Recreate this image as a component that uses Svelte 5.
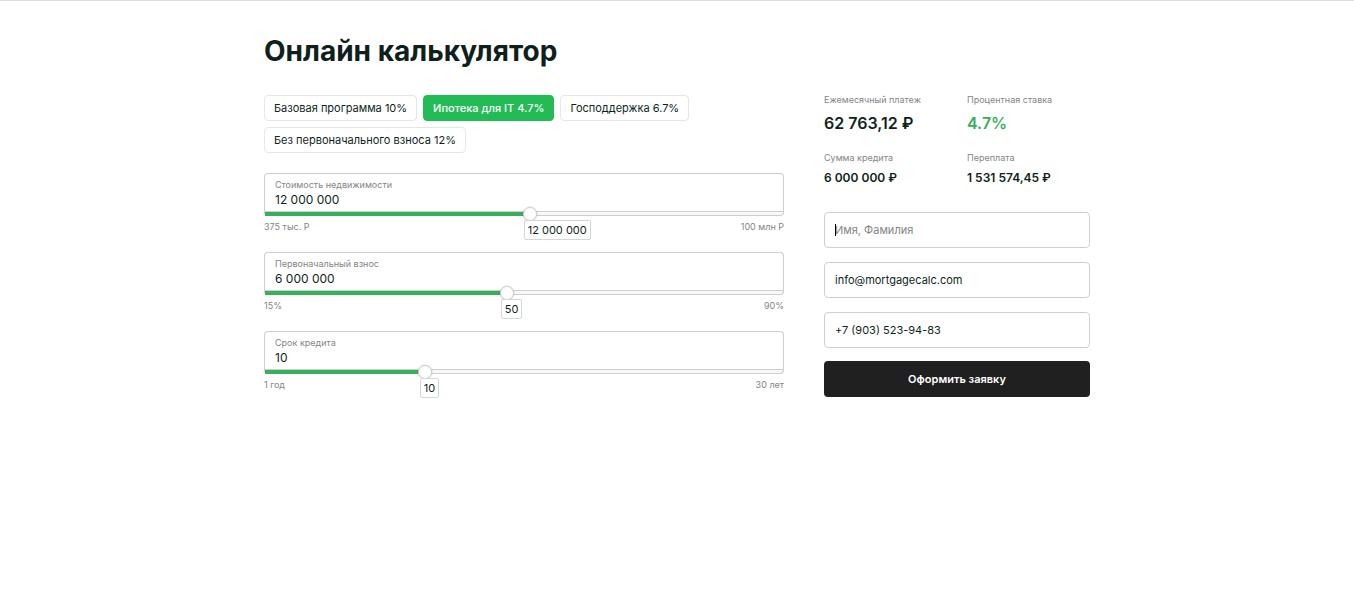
<script>
  let programs = ['Базовая программа 10%', 'Ипотека для IT 4.7%', 'Господдержка 6.7%', 'Без первоначального взноса 12%'];
  let active = $state(1);

  let sliders = $state([
    { id: 'cost', label: 'Стоимость недвижимости', value: '12 000 000', tip: '12 000 000', min: 0, max: 100, step: 0.1, pos: 51.1, from: '375 тыс. Р', to: '100 млн Р' },
    { id: 'payment', label: 'Первоначальный взнос', value: '6 000 000', tip: '50', min: 15, max: 90, step: 1, pos: 50, from: '15%', to: '90%' },
    { id: 'term', label: 'Срок кредита', value: '10', tip: '10', min: 1, max: 30, step: 1, pos: 10, from: '1 год', to: '30 лет' }
  ]);

  const share = (s) => ((s.pos - s.min) / (s.max - s.min)) * 100;

  let totals = [
    { label: 'Ежемесячный платеж', value: '62 763,12 ₽', kind: 'big' },
    { label: 'Процентная ставка', value: '4.7%', kind: 'big green' },
    { label: 'Сумма кредита', value: '6 000 000 ₽', kind: '' },
    { label: 'Переплата', value: '1 531 574,45 ₽', kind: '' }
  ];

  let name = $state('');
  let email = $state('info@mortgagecalc.com');
  let phone = $state('+7 (903) 523-94-83');
</script>

<main>
  <div class="container">
    <h1>Онлайн калькулятор</h1>
    <div class="columns">
      <section class="params">
        <div class="programs">
          {#each programs as p, i}
            <button type="button" class="program" class:active={active === i} aria-pressed={active === i} onclick={() => (active = i)}>{p}</button>
          {/each}
        </div>

        {#each sliders as s}
          <div class="param">
            <div class="box">
              <label for={s.id}>{s.label}</label>
              <input class="value" id={s.id} type="text" bind:value={s.value} />
              <div class="track">
                <div class="fill" style="width: {share(s)}%"></div>
                <input class="range" type="range" min={s.min} max={s.max} step={s.step} bind:value={s.pos} aria-label={s.label} />
                <output class="tip" style="left: {share(s)}%">{s.tip}</output>
              </div>
            </div>
            <div class="limits"><span>{s.from}</span><span>{s.to}</span></div>
          </div>
        {/each}
      </section>

      <section class="summary">
        <dl class="totals">
          {#each totals as t}
            <div>
              <dt>{t.label}</dt>
              <dd class={t.kind}>{t.value}</dd>
            </div>
          {/each}
        </dl>
        <form onsubmit={(e) => e.preventDefault()}>
          <div class="fields">
            <div class="entry">
              <input type="text" bind:value={name} placeholder="Имя, Фамилия" aria-label="Имя, Фамилия" />
              {#if !name}<span class="caret"></span>{/if}
            </div>
            <input type="email" bind:value={email} aria-label="Email" />
            <input type="tel" bind:value={phone} aria-label="Телефон" />
          </div>
          <button type="submit" class="submit">Оформить заявку</button>
        </form>
      </section>
    </div>
  </div>
</main>

<style>
  :global(body) {
    background: #fff;
  }
  main,
  main * {
    box-sizing: border-box;
  }
  main {
    border-top: 1px solid #dedee2;
    font-family: Inter, 'Liberation Sans', sans-serif;
    font-size: 11px;
    color: #0f1f1c;
  }
  button,
  input {
    font: inherit;
    color: inherit;
    margin: 0;
  }
  .container {
    max-width: 866px;
    margin: 0 auto;
    padding: 32px 20px 40px;
  }
  h1 {
    margin: 0 0 26px;
    font-size: 28px;
    line-height: 36px;
    font-weight: 700;
  }
  .columns {
    display: grid;
    grid-template-columns: minmax(0, 520fr) minmax(0, 266fr);
    gap: 40px;
  }
  .programs {
    display: flex;
    flex-wrap: wrap;
    gap: 6px;
    margin-bottom: 20px;
  }
  .program {
    height: 26px;
    padding: 0 9px;
    border: 1px solid #e6e6e6;
    border-radius: 4px;
    background: #fff;
    line-height: 16px;
    cursor: pointer;
  }
  .program.active {
    background: #22bb55;
    border-color: #22bb55;
    color: #fff;
    font-weight: 500;
  }
  .param {
    margin-bottom: 19px;
  }
  .box {
    display: flex;
    flex-direction: column;
    border: 1px solid #cecece;
    border-bottom: 0;
    border-radius: 4px;
  }
  .box label {
    padding: 5px 10px 0;
    font-size: 9px;
    line-height: 12px;
    color: #858585;
  }
  .value {
    width: 100%;
    height: 18px;
    padding: 0 10px;
    border: 0;
    outline: 0;
    background: none;
    font-size: 12px;
    line-height: 18px;
  }
  .track {
    position: relative;
    height: 5px;
    margin: 2px -1px 0;
    border: 1px solid #cecece;
    border-radius: 0 0 4px 4px;
    background: #f8f8f8;
  }
  .fill {
    height: 4px;
    background: #35b05d;
  }
  .range {
    position: absolute;
    left: -8px;
    top: -5px;
    width: calc(100% + 16px);
    height: 14px;
    appearance: none;
    background: none;
    cursor: pointer;
  }
  .range::-webkit-slider-thumb {
    appearance: none;
    width: 14px;
    height: 14px;
    border: 1px solid #cfcfcf;
    border-radius: 50%;
    background: #fff;
    box-shadow: 0 0 2px rgba(0, 0, 0, 0.2);
  }
  .tip {
    position: absolute;
    top: 8px;
    margin-left: -6px;
    padding: 0 3px;
    border: 1px solid #d6d6d6;
    border-radius: 2px;
    background: #fff;
    line-height: 18px;
    white-space: nowrap;
  }
  .limits {
    display: flex;
    justify-content: space-between;
    padding-top: 5px;
    font-size: 9px;
    line-height: 12px;
    color: #858585;
  }
  .totals {
    display: grid;
    grid-template-columns: 143fr 123fr;
    row-gap: 18px;
    margin: 0 0 25px;
  }
  dt {
    font-size: 9px;
    line-height: 10px;
    color: #858585;
  }
  dd {
    margin: 6px 0 0;
    font-size: 12px;
    line-height: 18px;
    font-weight: 600;
  }
  dd.big {
    font-size: 16px;
    line-height: 24px;
  }
  dd.green {
    color: #35b05d;
  }
  form {
    display: grid;
    gap: 13px;
  }
  .fields {
    display: grid;
    gap: 14px;
  }
  .entry {
    position: relative;
  }
  .caret {
    position: absolute;
    left: 11px;
    top: 12px;
    width: 1px;
    height: 12px;
    background: #000;
    pointer-events: none;
  }
  form input {
    display: block;
    width: 100%;
    height: 36px;
    padding: 0 10px;
    border: 1px solid #cecece;
    border-radius: 4px;
    outline: 0;
    background: #fff;
  }
  form input::placeholder {
    color: #858585;
    opacity: 1;
  }
  .submit {
    height: 36px;
    border: 0;
    border-radius: 4px;
    background: #202020;
    color: #fff;
    font-weight: 600;
    cursor: pointer;
  }
  @media (max-width: 640px) {
    .columns {
      grid-template-columns: minmax(0, 1fr);
    }
  }
</style>
